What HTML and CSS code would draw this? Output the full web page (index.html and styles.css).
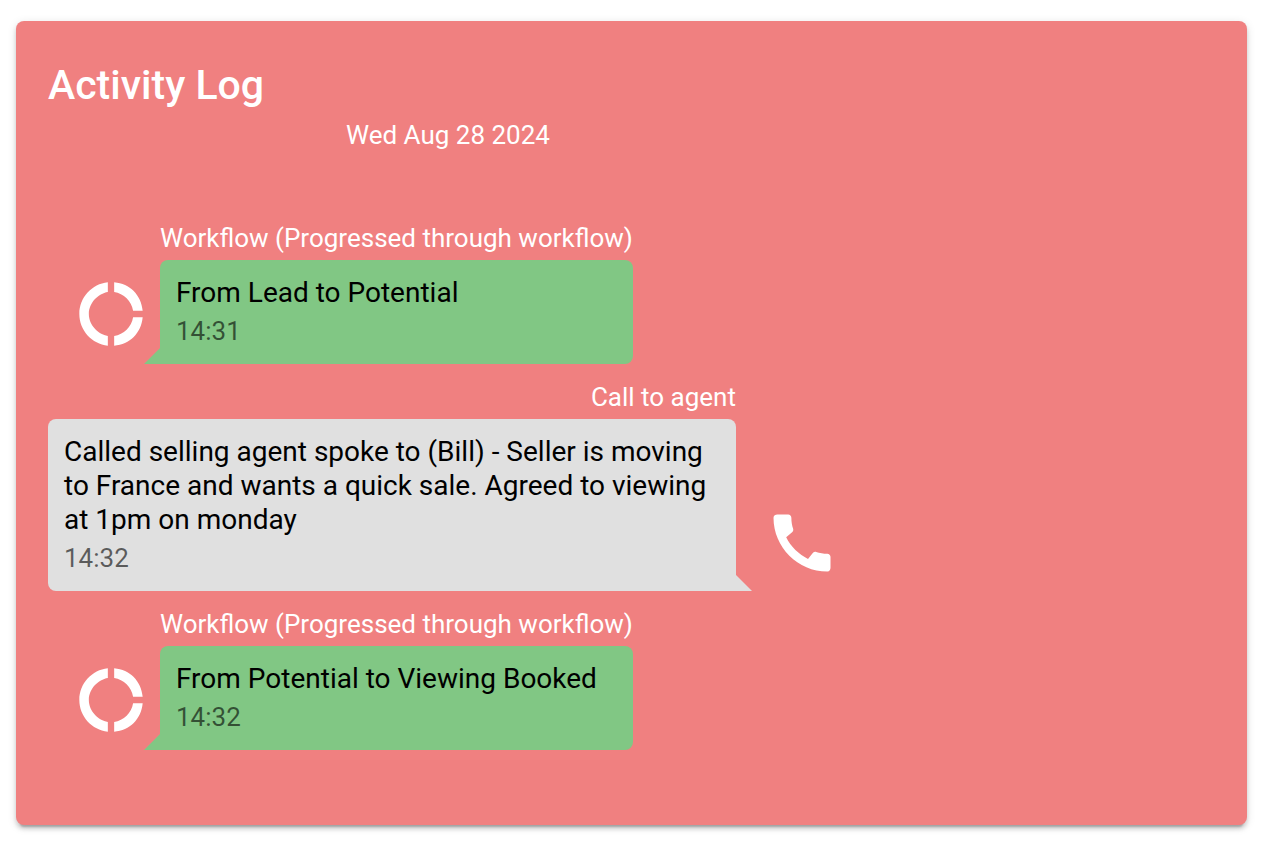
FILE: index.html
```html
<!DOCTYPE html>
<html lang="en">
<head>
<meta charset="utf-8">
<meta name="viewport" content="width=device-width, initial-scale=1">
<title>Activity Log</title>
<link rel="stylesheet" href="styles.css">
</head>
<body>
<main class="card">
  <h1 class="title">Activity Log</h1>
  <div class="chat">
    <p class="date">Wed Aug 28 2024</p>
    <article class="message received">
      <svg class="icon" viewBox="0 0 24 24" aria-hidden="true"><path d="M11 5.08V2c-5 .5-9 4.810-9 10s4 9.500 9 10v-3.080c-3-.480-6-3.400-6-6.920s3-6.440 6-6.920zM18.970 11H22c-.470-5-4-8.530-9-9v3.080C16 5.510 18.540 8 18.970 11zM13 18.920V22c5-.470 8.530-4 9-9h-3.030c-.430 3-2.970 5.490-5.970 5.920z"/></svg>
      <div class="content">
        <h2 class="name">Workflow (Progressed through workflow)</h2>
        <div class="bubble">
          <p class="text">From Lead to Potential</p>
          <time class="time">14:31</time>
        </div>
      </div>
    </article>
    <article class="message sent">
      <div class="content">
        <h2 class="name">Call to agent</h2>
        <div class="bubble">
          <p class="text">Called selling agent spoke to (Bill) - Seller is moving to France and wants a quick sale. Agreed to viewing at 1pm on monday</p>
          <time class="time">14:32</time>
        </div>
      </div>
      <svg class="icon" viewBox="0 0 24 24" aria-hidden="true"><path d="M20.010 15.380c-1.230 0-2.420-.2-3.530-.560-.350-.120-.740-.030-1.010.240l-1.570 1.970c-2.830-1.350-5.480-3.900-6.890-6.830l1.950-1.660c.270-.280.350-.670.240-1.020-.370-1.110-.560-2.300-.560-3.530 0-.540-.450-.990-.990-.990H4.190C3.650 3 3 3.240 3 3.990 3 13.280 10.730 21 20.010 21c.710 0 .990-.630.990-1.180v-3.450c0-.540-.450-.990-.990-.990z"/></svg>
    </article>
    <article class="message received">
      <svg class="icon" viewBox="0 0 24 24" aria-hidden="true"><path d="M11 5.080V2c-5 .5-9 4.810-9 10s4 9.500 9 10v-3.080c-3-.480-6-3.400-6-6.920s3-6.440 6-6.920zM18.970 11H22c-.470-5-4-8.530-9-9v3.080C16 5.510 18.540 8 18.970 11zM13 18.920V22c5-.470 8.530-4 9-9h-3.030c-.430 3-2.970 5.490-5.970 5.920z"/></svg>
      <div class="content">
        <h2 class="name">Workflow (Progressed through workflow)</h2>
        <div class="bubble">
          <p class="text">From Potential to Viewing Booked</p>
          <time class="time">14:32</time>
        </div>
      </div>
    </article>
  </div>
</main>
</body>
</html>
```
FILE: styles.css
```css
* {
  box-sizing: border-box;
}

body {
  margin: 0;
  padding: 21px 14px 19px 16px;
  background: #fff;
  font-family: Roboto, sans-serif;
  font-size: 28px;
}

h1, h2, p {
  margin: 0;
}

.card {
  padding: 32px 32px 75px;
  border-radius: 8px;
  background: #f08080;
  color: #fff;
  box-shadow: 0 6px 2px -4px rgba(0, 0, 0, 0.2), 0 4px 4px rgba(0, 0, 0, 0.14), 0 2px 10px rgba(0, 0, 0, 0.12);
}

.title {
  font-size: 41px;
  font-weight: 500;
  line-height: 64px;
}

.chat {
  max-width: 800px;
}

.date {
  margin-bottom: 68px;
  font-size: 26px;
  line-height: 36px;
  text-align: center;
}

.message {
  display: flex;
  align-items: flex-end;
  margin-bottom: 16px;
}

.message:last-child {
  margin-bottom: 0;
}

.icon {
  flex: none;
  width: 76px;
  height: 76px;
  fill: #fff;
}

.received .icon {
  margin: 0 11px 12px 25px;
}

.sent .icon {
  margin: 0 0 10px 28px;
}

.content {
  max-width: 688px;
}

.name {
  padding-bottom: 5px;
  font-size: 26px;
  font-weight: 400;
  line-height: 34px;
}

.sent .name {
  text-align: right;
}

.bubble {
  position: relative;
  padding: 16px;
  border-radius: 8px;
  background: #81c784;
  color: #000;
}

.bubble::after {
  content: "";
  position: absolute;
  bottom: 0;
  border-top: 16px solid transparent;
}

.received .bubble {
  border-bottom-left-radius: 0;
}

.received .bubble::after {
  right: 100%;
  border-right: 16px solid #81c784;
}

.sent .bubble {
  border-bottom-right-radius: 0;
  background: #e0e0e0;
}

.sent .bubble::after {
  left: 100%;
  border-left: 16px solid #e0e0e0;
}

.text {
  line-height: 34px;
}

.time {
  display: block;
  padding-top: 4px;
  color: rgba(0, 0, 0, 0.6);
  font-size: 26px;
  line-height: 34px;
}
```
